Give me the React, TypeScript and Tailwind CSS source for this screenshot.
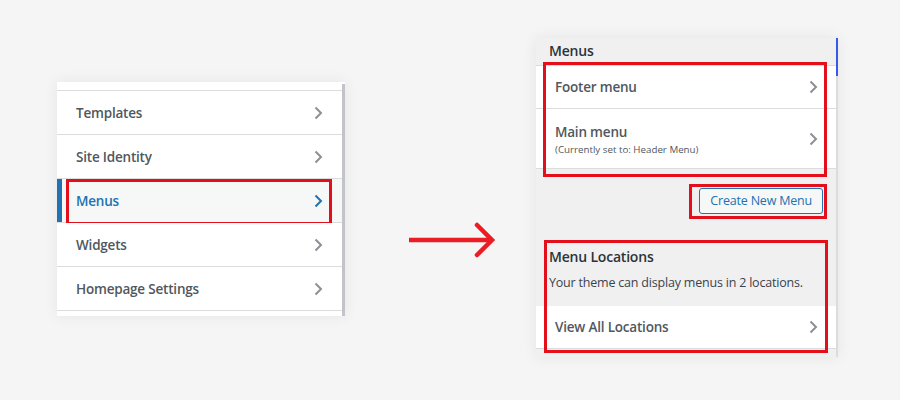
import React from 'react';

const font = { fontFamily: '"Open Sans", "Noto Sans", sans-serif' };

const Chevron: React.FC<{ active?: boolean }> = ({ active }) => (
  <svg width="9" height="14" viewBox="0 0 9 14" className="shrink-0">
    <polyline
      points="1.5,1.5 7,7 1.5,12.5"
      fill="none"
      stroke={active ? '#2271b1' : '#8c8f94'}
      strokeWidth="2"
    />
  </svg>
);

const leftItems = ['Templates', 'Site Identity', 'Menus', 'Widgets', 'Homepage Settings'];

const RedBox: React.FC<{ className: string }> = ({ className }) => (
  <div className={`pointer-events-none absolute border-[3px] border-[#e3101b] ${className}`} />
);

const LeftPanel = () => (
  <div className="mt-[82px] flex w-[288px] bg-white shadow-[0_0_14px_rgba(0,0,0,0.07)]">
    <div className="w-[285px]">
      <div className="h-[9px] border-b border-[#dcdcde]" />
      {leftItems.map((label) => {
        const active = label === 'Menus';
        return (
          <div
            key={label}
            className={`relative flex h-[44px] items-center justify-between border-b border-[#dcdcde] pl-[19px] pr-[19px] ${
              active ? 'bg-[#f6f7f7]' : 'bg-white'
            }`}
          >
            {active && <div className="absolute left-0 top-0 h-full w-[5px] bg-[#2271b1]" />}
            <span
              className={`pt-[1px] text-[13.5px] font-[550] tracking-[-0.2px] ${active ? 'text-[#2271b1]' : 'text-[#50575e]'}`}
            >
              {label}
            </span>
            <Chevron active={active} />
            {active && <RedBox className="left-[9px] right-[10px] top-0 bottom-[-3px]" />}
          </div>
        );
      })}
      <div className="h-[5px]" />
    </div>
    <div className="mt-[2px] w-[3px] bg-[#c3c4c7]" />
  </div>
);

const Arrow = () => (
  <div className="ml-[63px] mt-[222px] w-[88px]">
    <svg width="88" height="36" viewBox="0 0 88 36">
      <line x1="1" y1="18" x2="84" y2="18" stroke="#ea1c24" strokeWidth="4.5" />
      <polyline points="69,3 84,18 69,33" fill="none" stroke="#ea1c24" strokeWidth="4.5" strokeLinecap="round" />
    </svg>
  </div>
);

const RightPanel = () => (
  <div className="ml-[40px] mt-[38px] flex w-[302px] bg-[#f0f0f1] shadow-[0_0_14px_rgba(0,0,0,0.07)]">
    <div className="w-[300px] pb-[8px]">
      <div className="flex h-[27px] items-center pb-[3px] pl-[13px] text-[14px] font-[550] tracking-[-0.2px] text-[#2c3338]">
        Menus
      </div>
      <div className="relative">
        <div className="flex h-[44px] items-center justify-between border-y border-[#dcdcde] bg-white pl-[19px] pr-[18px]">
          <span className="text-[13.5px] font-[550] tracking-[-0.2px] text-[#50575e]">Footer menu</span>
          <Chevron />
        </div>
        <div className="flex h-[60px] items-start justify-between border-b border-[#dcdcde] bg-white pl-[19px] pr-[18px] pt-[13px]">
          <div className="flex flex-col">
            <span className="text-[13.5px] font-[550] leading-[20px] tracking-[-0.2px] text-[#50575e]">Main menu</span>
            <span className="mt-[1px] text-[9.75px] leading-[14px] text-[#50575e]">(Currently set to: Header Menu)</span>
          </div>
          <div className="pt-[10px]">
            <Chevron />
          </div>
        </div>
        <RedBox className="left-[7px] right-[9px] top-[-3px] bottom-[-8px]" />
      </div>
      <div className="mt-[18px] flex justify-end pr-[13px]">
        <div className="relative">
          <button className="h-[26px] rounded-[3px] border border-[#2271b1] bg-[#f6f7f7] px-[10px] text-[12.5px] tracking-[-0.2px] text-[#2271b1]">
            Create New Menu
          </button>
          <RedBox className="left-[-10px] right-[-4px] top-[-3px] bottom-[-5px]" />
        </div>
      </div>
      <div className="relative mt-[26px]">
        <div className="pl-[13px] pt-[7px]">
          <div className="text-[14px] font-[550] leading-[20px] tracking-[-0.2px] text-[#2c3338]">Menu Locations</div>
          <div className="mt-[6px] text-[12.5px] leading-[20px] tracking-[-0.2px] text-[#3c434a]">
            Your theme can display menus in 2 locations.
          </div>
        </div>
        <div className="mt-[13px] flex h-[43px] items-center justify-between border-b border-[#dcdcde] bg-white pl-[19px] pr-[18px]">
          <span className="text-[13.5px] font-[550] tracking-[-0.2px] text-[#50575e]">View All Locations</span>
          <Chevron />
        </div>
        <RedBox className="left-[8px] right-[8px] top-0 bottom-[-4px]" />
      </div>
    </div>
    <div className="flex w-[2px] flex-col">
      <div className="h-[38px] bg-[#3858e9]" />
      <div className="flex-1 bg-[#dcdcde]" />
    </div>
  </div>
);

export default function App() {
  return (
    <div className="flex h-[400px] w-[900px] items-start bg-[#f5f5f5] pl-[57px]" style={font}>
      <LeftPanel />
      <Arrow />
      <RightPanel />
    </div>
  );
}
